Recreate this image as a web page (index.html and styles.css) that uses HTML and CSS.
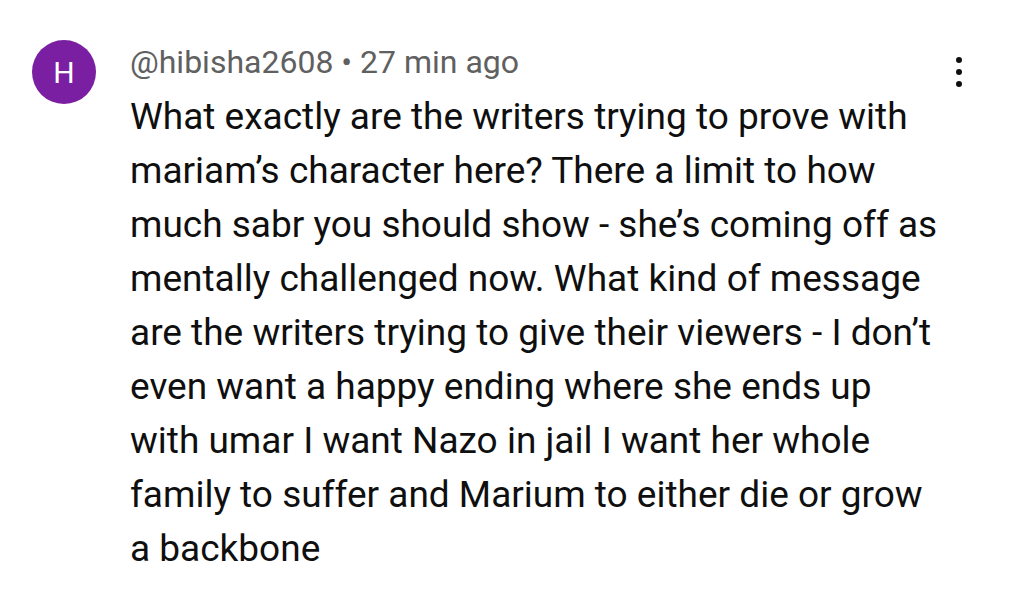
FILE: index.html
```html
<!DOCTYPE html>
<html lang="en">
<head>
    <meta charset="UTF-8">
    <meta name="viewport" content="width=device-width, initial-scale=1.0">
    <title>Comment</title>
    <link rel="stylesheet" href="styles.css">
</head>
<body>
    <div class="comment">
        <div class="avatar">H</div>
        <div class="comment-body">
            <div class="meta">@hibisha2608 • 27 min ago</div>
            <p class="text">What exactly are the writers trying to prove with mariam’s character here? There a limit to how much sabr you should show - she’s coming off as mentally challenged now. What kind of message are the writers trying to give their viewers - I don’t even want a happy ending where she ends up with umar I want Nazo in jail I want her whole family to suffer and Marium to either die or grow a backbone</p>
        </div>
        <button class="more" aria-label="More">
            <span></span><span></span><span></span>
        </button>
    </div>
</body>
</html>
```

FILE: styles.css
```css
body {
    margin: 0;
    background: #ffffff;
    font-family: Roboto, "Liberation Sans", sans-serif;
    color: #0f0f0f;
}

.comment {
    display: flex;
    align-items: flex-start;
    padding: 40px 55px 0 32px;
}

.avatar {
    flex: none;
    width: 64px;
    height: 64px;
    border-radius: 50%;
    background: #7b1fa2;
    color: #fff;
    font-size: 30px;
    display: flex;
    align-items: center;
    justify-content: center;
}

.comment-body {
    flex: 1;
    margin-left: 34px;
}

.meta {
    font-size: 32px;
    color: #606060;
    line-height: 44px;
}

.text {
    margin: 6px 0 0;
    font-size: 37px;
    line-height: 54px;
    max-width: 812px;
}

.more {
    flex: none;
    background: transparent;
    border: none;
    padding: 0;
    margin-top: 17px;
    width: 20px;
    display: flex;
    flex-direction: column;
    align-items: center;
    gap: 6px;
}

.more span {
    width: 6px;
    height: 6px;
    border-radius: 50%;
    background: #0f0f0f;
}
```
